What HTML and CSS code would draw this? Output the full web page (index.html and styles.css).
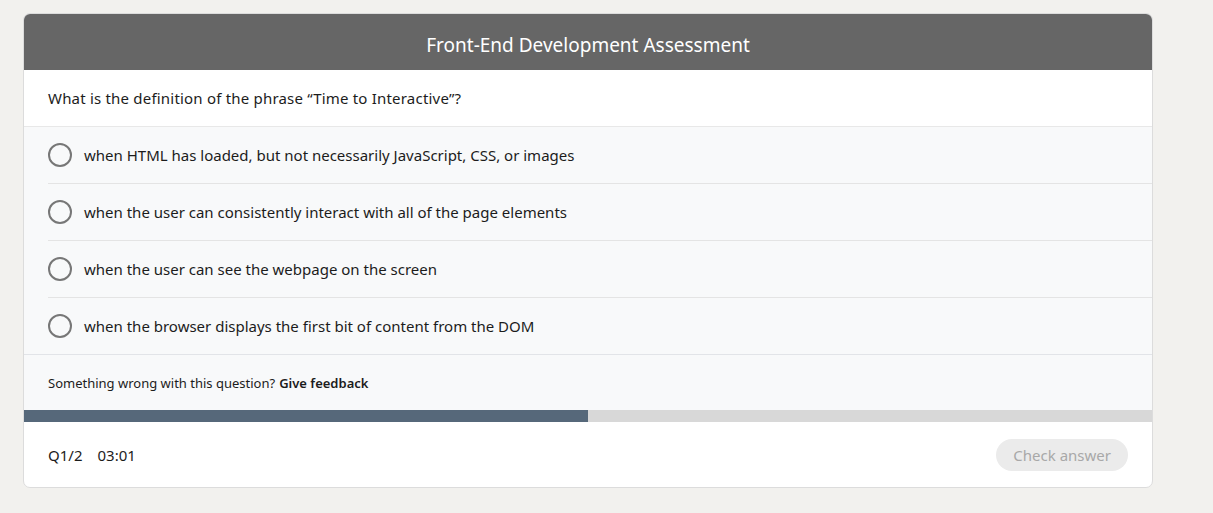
FILE: index.html
```html
<!DOCTYPE html>
<html>
<head>
<meta charset="utf-8">
<link rel="stylesheet" href="styles.css">
</head>
<body>
<div class="card">
  <div class="header">Front-End Development Assessment</div>
  <div class="question">What is the definition of the phrase “Time to Interactive”?</div>
  <div class="options">
    <div class="option"><span class="radio"></span><span class="label">when HTML has loaded, but not necessarily JavaScript, CSS, or images</span></div>
    <div class="option"><span class="radio"></span><span class="label">when the user can consistently interact with all of the page elements</span></div>
    <div class="option"><span class="radio"></span><span class="label">when the user can see the webpage on the screen</span></div>
    <div class="option"><span class="radio"></span><span class="label">when the browser displays the first bit of content from the DOM</span></div>
  </div>
  <div class="feedback">Something wrong with this question? <b>Give feedback</b></div>
  <div class="progress"><div class="fill" style="width:50%"></div></div>
  <div class="footer">
    <div class="meta"><span>Q1/2</span><span>03:01</span></div>
    <button class="check">Check answer</button>
  </div>
</div>
</body>
</html>
```
FILE: styles.css
```css
html, body { margin: 0; padding: 0; }
body {
  background: #f2f1ee;
  font-family: "Noto Sans", "Open Sans", sans-serif;
  color: #1c1c1c;
  padding: 13px 0 0 23px;
}
.card {
  width: 1128px;
  border: 1px solid #dcdcdc;
  border-radius: 7px;
  overflow: hidden;
  background: #fff;
}
.header {
  background: #666;
  color: #fff;
  height: 56px;
  box-sizing: border-box;
  padding-top: 5px;
  display: flex;
  align-items: center;
  justify-content: center;
  font-size: 19px;
}
.question {
  height: 56px;
  display: flex;
  align-items: center;
  padding-left: 24px;
  font-size: 15px;
  letter-spacing: 0.2px;
  border-bottom: 1px solid #e8e8e8;
}
.options { background: #f8f9fa; }
.option {
  height: 56px;
  margin-left: 24px;
  display: flex;
  align-items: center;
  border-bottom: 1px solid #e4e4e4;
  font-size: 15px;
}
.option:last-child { border-bottom: none; }
.radio {
  width: 20px;
  height: 20px;
  border: 2px solid #777;
  border-radius: 50%;
  box-sizing: content-box;
  margin-right: 12px;
  flex: none;
}
.feedback {
  background: #f8f9fa;
  height: 55px;
  border-top: 1px solid #e2e4e8;
  display: flex;
  align-items: center;
  padding-left: 24px;
  font-size: 13px;
}
.feedback b { font-weight: 600; margin-left: 4px; }
.progress { height: 12px; background: #d8d8d8; }
.fill { height: 100%; background: #56687a; }
.footer {
  height: 65px;
  display: flex;
  align-items: center;
  justify-content: space-between;
  padding: 0 24px;
}
.meta { display: flex; gap: 15px; font-size: 15px; }
.check {
  background: #ebebeb;
  color: #a8a8a8;
  border: none;
  border-radius: 16px;
  height: 32px;
  padding: 0 17px;
  font-family: inherit;
  font-size: 15px;
}
```
